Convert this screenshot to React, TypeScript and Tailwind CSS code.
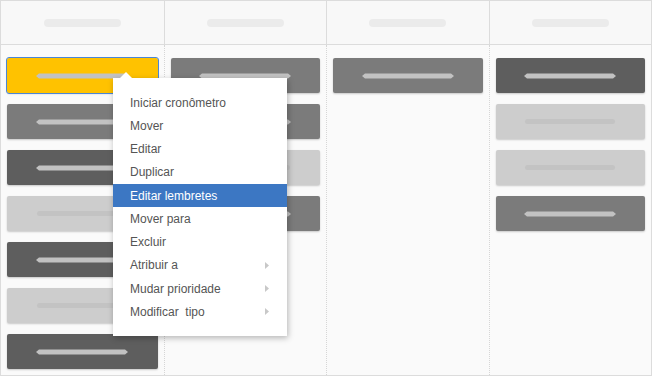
import React from 'react';

type Tone = 'yellow' | 'medium' | 'dark' | 'light';

const columns: Tone[][] = [
  ['yellow', 'medium', 'dark', 'light', 'dark', 'light', 'dark'],
  ['medium', 'medium', 'light', 'medium'],
  ['medium'],
  ['dark', 'light', 'light', 'medium'],
];

const toneClass: Record<Tone, string> = {
  yellow: 'bg-[#ffc200] outline outline-[1.5px] outline-[#4a86d6]',
  medium: 'bg-[#7b7b7b]',
  dark: 'bg-[#5e5e5e]',
  light: 'bg-[#cdcdcd]',
};

const menuItems = [
  { label: 'Iniciar cronômetro' },
  { label: 'Mover' },
  { label: 'Editar' },
  { label: 'Duplicar' },
  { label: 'Editar lembretes', active: true },
  { label: 'Mover para' },
  { label: 'Excluir' },
  { label: 'Atribuir a', sub: true },
  { label: 'Mudar prioridade', sub: true },
  { label: 'Modificar  tipo', sub: true },
];

function Bar({ light }: { light: boolean }) {
  if (light) {
    return <div className="w-[90px] h-[5px] rounded-full bg-[#c3c3c3]" />;
  }
  return (
    <svg width="92" height="6" viewBox="0 0 92 6">
      <polygon points="0,3 3,0.5 89,0.5 92,3 89,5.5 3,5.5" fill="#c2c2c2" />
    </svg>
  );
}

function Card({ tone }: { tone: Tone }) {
  return (
    <div
      className={`h-[35px] rounded-[2px] flex items-center justify-center shadow-[0_1px_2px_rgba(0,0,0,0.2)] ${toneClass[tone]}`}
    >
      <Bar light={tone === 'light'} />
    </div>
  );
}

function ContextMenu() {
  return (
    <div className="absolute left-[112px] top-[77px] w-[174px] bg-white pt-[13px] pb-[12px] shadow-[1px_2px_6px_rgba(0,0,0,0.28)]">
      <svg className="absolute left-[6px] -top-[6px]" width="14" height="7" viewBox="0 0 14 7">
        <polygon points="0,7 7,0 14,7" fill="#ffffff" />
      </svg>
      {menuItems.map((item) => (
        <div
          key={item.label}
          className={`h-[23.25px] flex items-center justify-between pl-[17px] pr-[18px] text-[12px] whitespace-pre ${
            item.active ? 'bg-[#3c77c3] text-white' : 'text-[#555]'
          }`}
        >
          <span>{item.label}</span>
          {item.sub && (
            <svg width="4" height="7" viewBox="0 0 4 7">
              <polygon points="0,0 4,3.5 0,7" fill="#c8c8c8" />
            </svg>
          )}
        </div>
      ))}
    </div>
  );
}

export default function App() {
  return (
    <div
      className="relative w-[652px] h-[376px] border border-[#dcdcdc] bg-[#fafafa] flex flex-col overflow-hidden"
      style={{ fontFamily: '"Liberation Sans", Arial, sans-serif' }}
    >
      <div className="grid grid-cols-4 h-[44px] shrink-0 bg-[#f8f8f8] border-b border-[#dcdcdc]">
        {columns.map((_, i) => (
          <div
            key={i}
            className={`flex items-center justify-center ${i > 0 ? 'border-l border-[#dcdcdc]' : ''}`}
          >
            <div className="w-[77px] h-[8px] rounded-full bg-[#ebebeb]" />
          </div>
        ))}
      </div>
      <div className="grid grid-cols-4 flex-1">
        {columns.map((cards, i) => (
          <div
            key={i}
            className={`flex flex-col gap-[11px] px-[6px] pt-[13px] ${i > 0 ? 'border-l border-dotted border-[#d6d6d6]' : ''}`}
          >
            {cards.map((tone, j) => (
              <Card key={j} tone={tone} />
            ))}
          </div>
        ))}
      </div>
      <ContextMenu />
    </div>
  );
}
